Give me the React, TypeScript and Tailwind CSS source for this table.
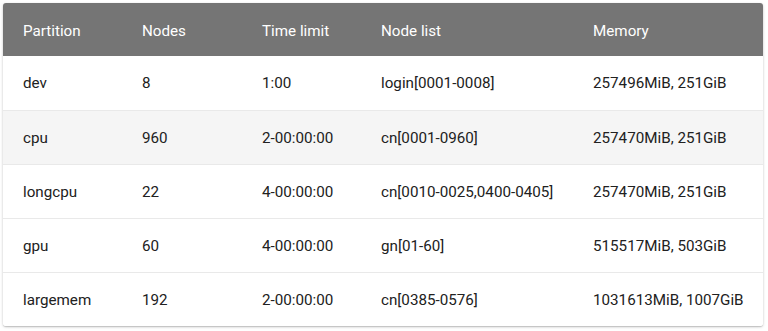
const columns = ["Partition", "Nodes", "Time limit", "Node list", "Memory"];

const rows = [
  ["dev", "8", "1:00", "login[0001-0008]", "257496MiB, 251GiB"],
  ["cpu", "960", "2-00:00:00", "cn[0001-0960]", "257470MiB, 251GiB"],
  ["longcpu", "22", "4-00:00:00", "cn[0010-0025,0400-0405]", "257470MiB, 251GiB"],
  ["gpu", "60", "4-00:00:00", "gn[01-60]", "515517MiB, 503GiB"],
  ["largemem", "192", "2-00:00:00", "cn[0385-0576]", "1031613MiB, 1007GiB"],
];

const widths = ["w-[119px]", "w-[120px]", "w-[119px]", "w-[212px]", ""];

export default function App() {
  return (
    <div className="bg-white min-h-screen p-[3px] font-['Roboto',sans-serif]">
      <div className="w-[760px] rounded-[3px] overflow-hidden shadow-[0_1px_3px_rgba(0,0,0,0.2),0_1px_1px_rgba(0,0,0,0.12)]">
        <table className="w-full border-collapse text-[15.2px] table-fixed">
          <thead>
            <tr className="bg-[#757575] text-white h-[53px]">
              {columns.map((c, i) => (
                <th key={c} className={`${widths[i]} text-left font-normal pl-5 pt-[3px]`}>
                  {c}
                </th>
              ))}
            </tr>
          </thead>
          <tbody>
            {rows.map((r, ri) => (
              <tr
                key={r[0]}
                className={`h-[54px] text-[#212121] ${ri > 0 ? "border-t border-[#e9e9e9]" : ""} ${ri === 1 ? "bg-[#f5f5f5]" : "bg-white"}`}
              >
                {r.map((cell, ci) => (
                  <td key={ci} className="pl-5 pt-[2px]">
                    {cell}
                  </td>
                ))}
              </tr>
            ))}
          </tbody>
        </table>
      </div>
    </div>
  );
}
